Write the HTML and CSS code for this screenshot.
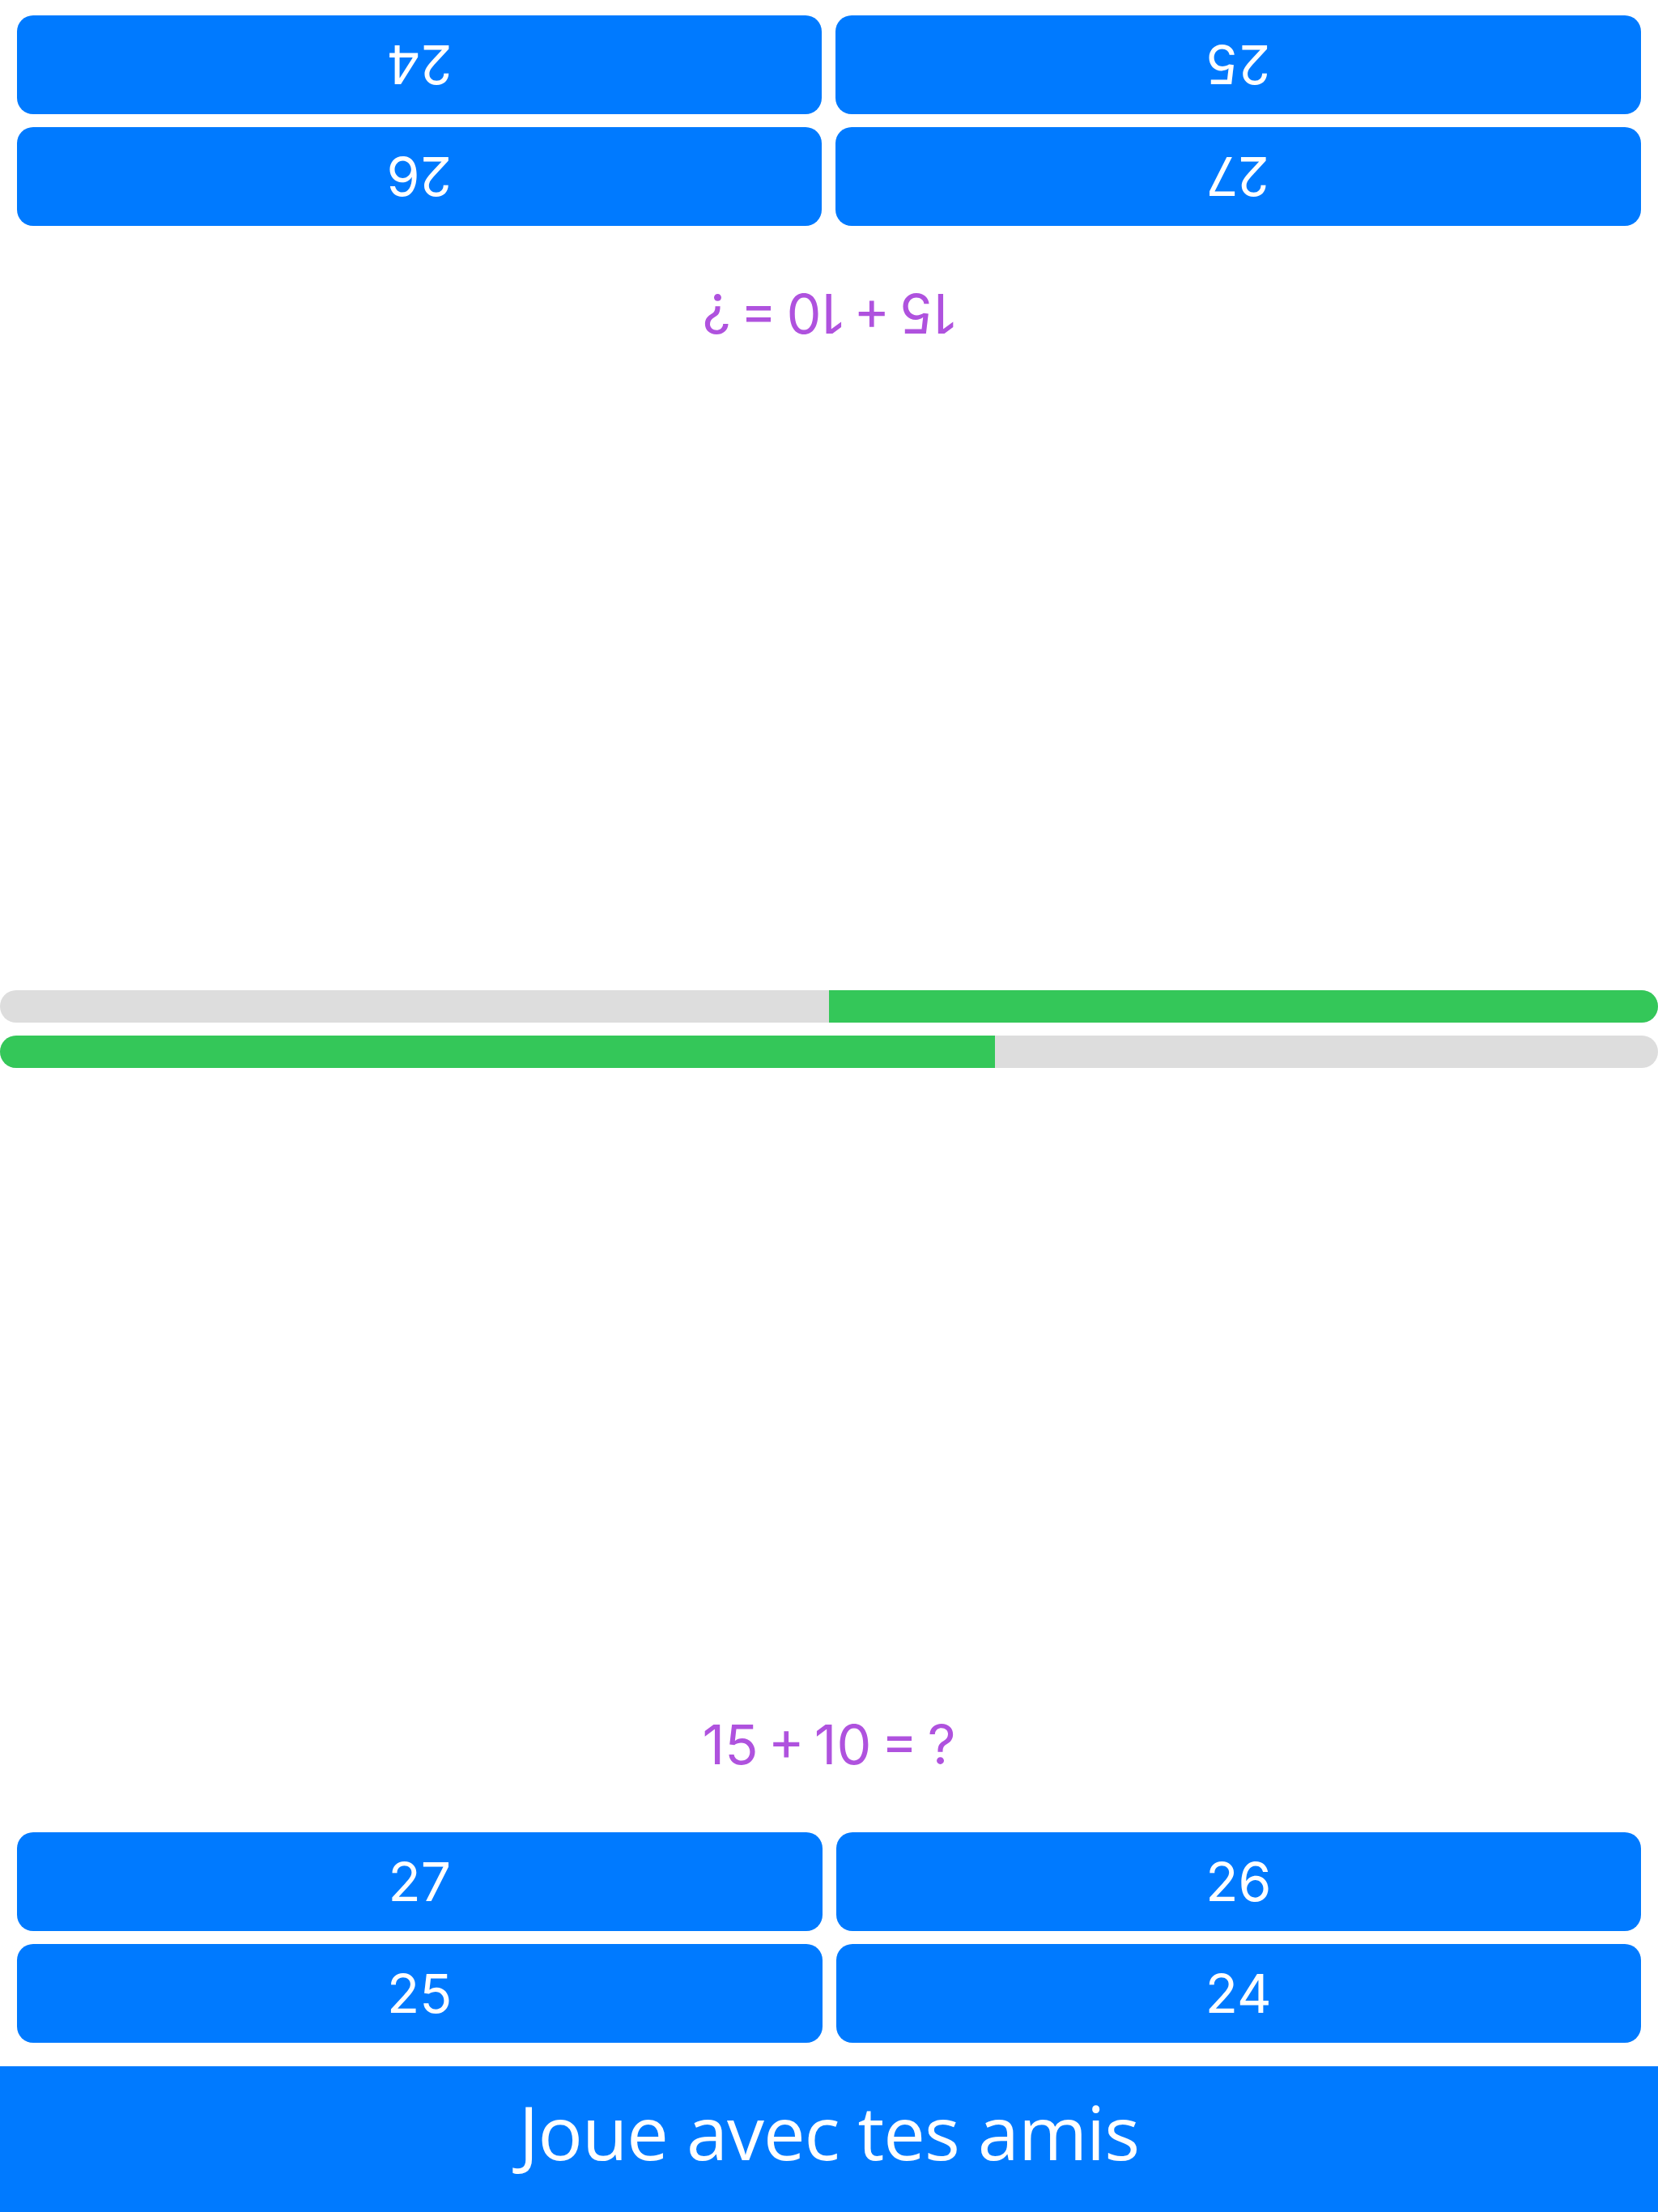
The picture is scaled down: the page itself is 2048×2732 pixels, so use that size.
FILE: index.html
```html
<!DOCTYPE html>
<html lang="fr">
<head>
<meta charset="utf-8">
<title>Quiz</title>
<link rel="stylesheet" href="styles.css">
</head>
<body>
<div class="app">
  <section class="panel panel-flipped">
    <div class="bar"><div class="bar-fill" style="width:50%"></div></div>
    <div class="spacer"></div>
    <div class="question">15 + 10 = ?</div>
    <div class="answers">
      <button class="answer">27</button>
      <button class="answer">26</button>
      <button class="answer">25</button>
      <button class="answer">24</button>
    </div>
  </section>
  <section class="panel">
    <div class="bar"><div class="bar-fill" style="width:60%"></div></div>
    <div class="spacer"></div>
    <div class="question">15 + 10 = ?</div>
    <div class="answers">
      <button class="answer">27</button>
      <button class="answer">26</button>
      <button class="answer">25</button>
      <button class="answer">24</button>
    </div>
  </section>
  <footer class="footer">Joue avec tes amis</footer>
</div>
</body>
</html>
```
FILE: styles.css
```css
html, body {
  margin: 0;
  padding: 0;
  background: #ffffff;
}
body {
  width: 2048px;
  height: 2732px;
  overflow: hidden;
  font-family: "Inter", "Liberation Sans", sans-serif;
}
.app {
  display: flex;
  flex-direction: column;
  height: 2732px;
}
.panel {
  height: 1271px;
  box-sizing: border-box;
  padding: 8px 0 19px;
  display: flex;
  flex-direction: column;
}
.panel-flipped {
  transform: rotate(180deg);
}
.bar {
  height: 40px;
  border-radius: 20px;
  background: #dddddd;
  overflow: hidden;
  display: flex;
}
.bar-fill {
  height: 100%;
  background: #34c759;
}
.spacer {
  flex: 1;
}
.question {
  height: 100px;
  line-height: 100px;
  text-align: center;
  color: #af52de;
  font-size: 68px;
  word-spacing: -7px;
  margin-bottom: 59px;
}
.answers {
  display: grid;
  grid-template-columns: 1fr 1fr;
  column-gap: 17px;
  row-gap: 16px;
  padding: 0 21px;
}
.answer {
  height: 122px;
  border: none;
  border-radius: 20px;
  background: #007aff;
  color: #ffffff;
  font-family: "Inter", "Liberation Sans", sans-serif;
  font-size: 66px;
  padding: 0;
  margin: 0;
}
.footer {
  margin-top: 10px;
  height: 180px;
  box-sizing: border-box;
  padding-bottom: 20px;
  background: #007aff;
  color: #ffffff;
  display: flex;
  align-items: center;
  justify-content: center;
  font-family: "Open Sans", "Noto Sans", sans-serif;
  font-size: 92px;
  letter-spacing: -1px;
}
```
